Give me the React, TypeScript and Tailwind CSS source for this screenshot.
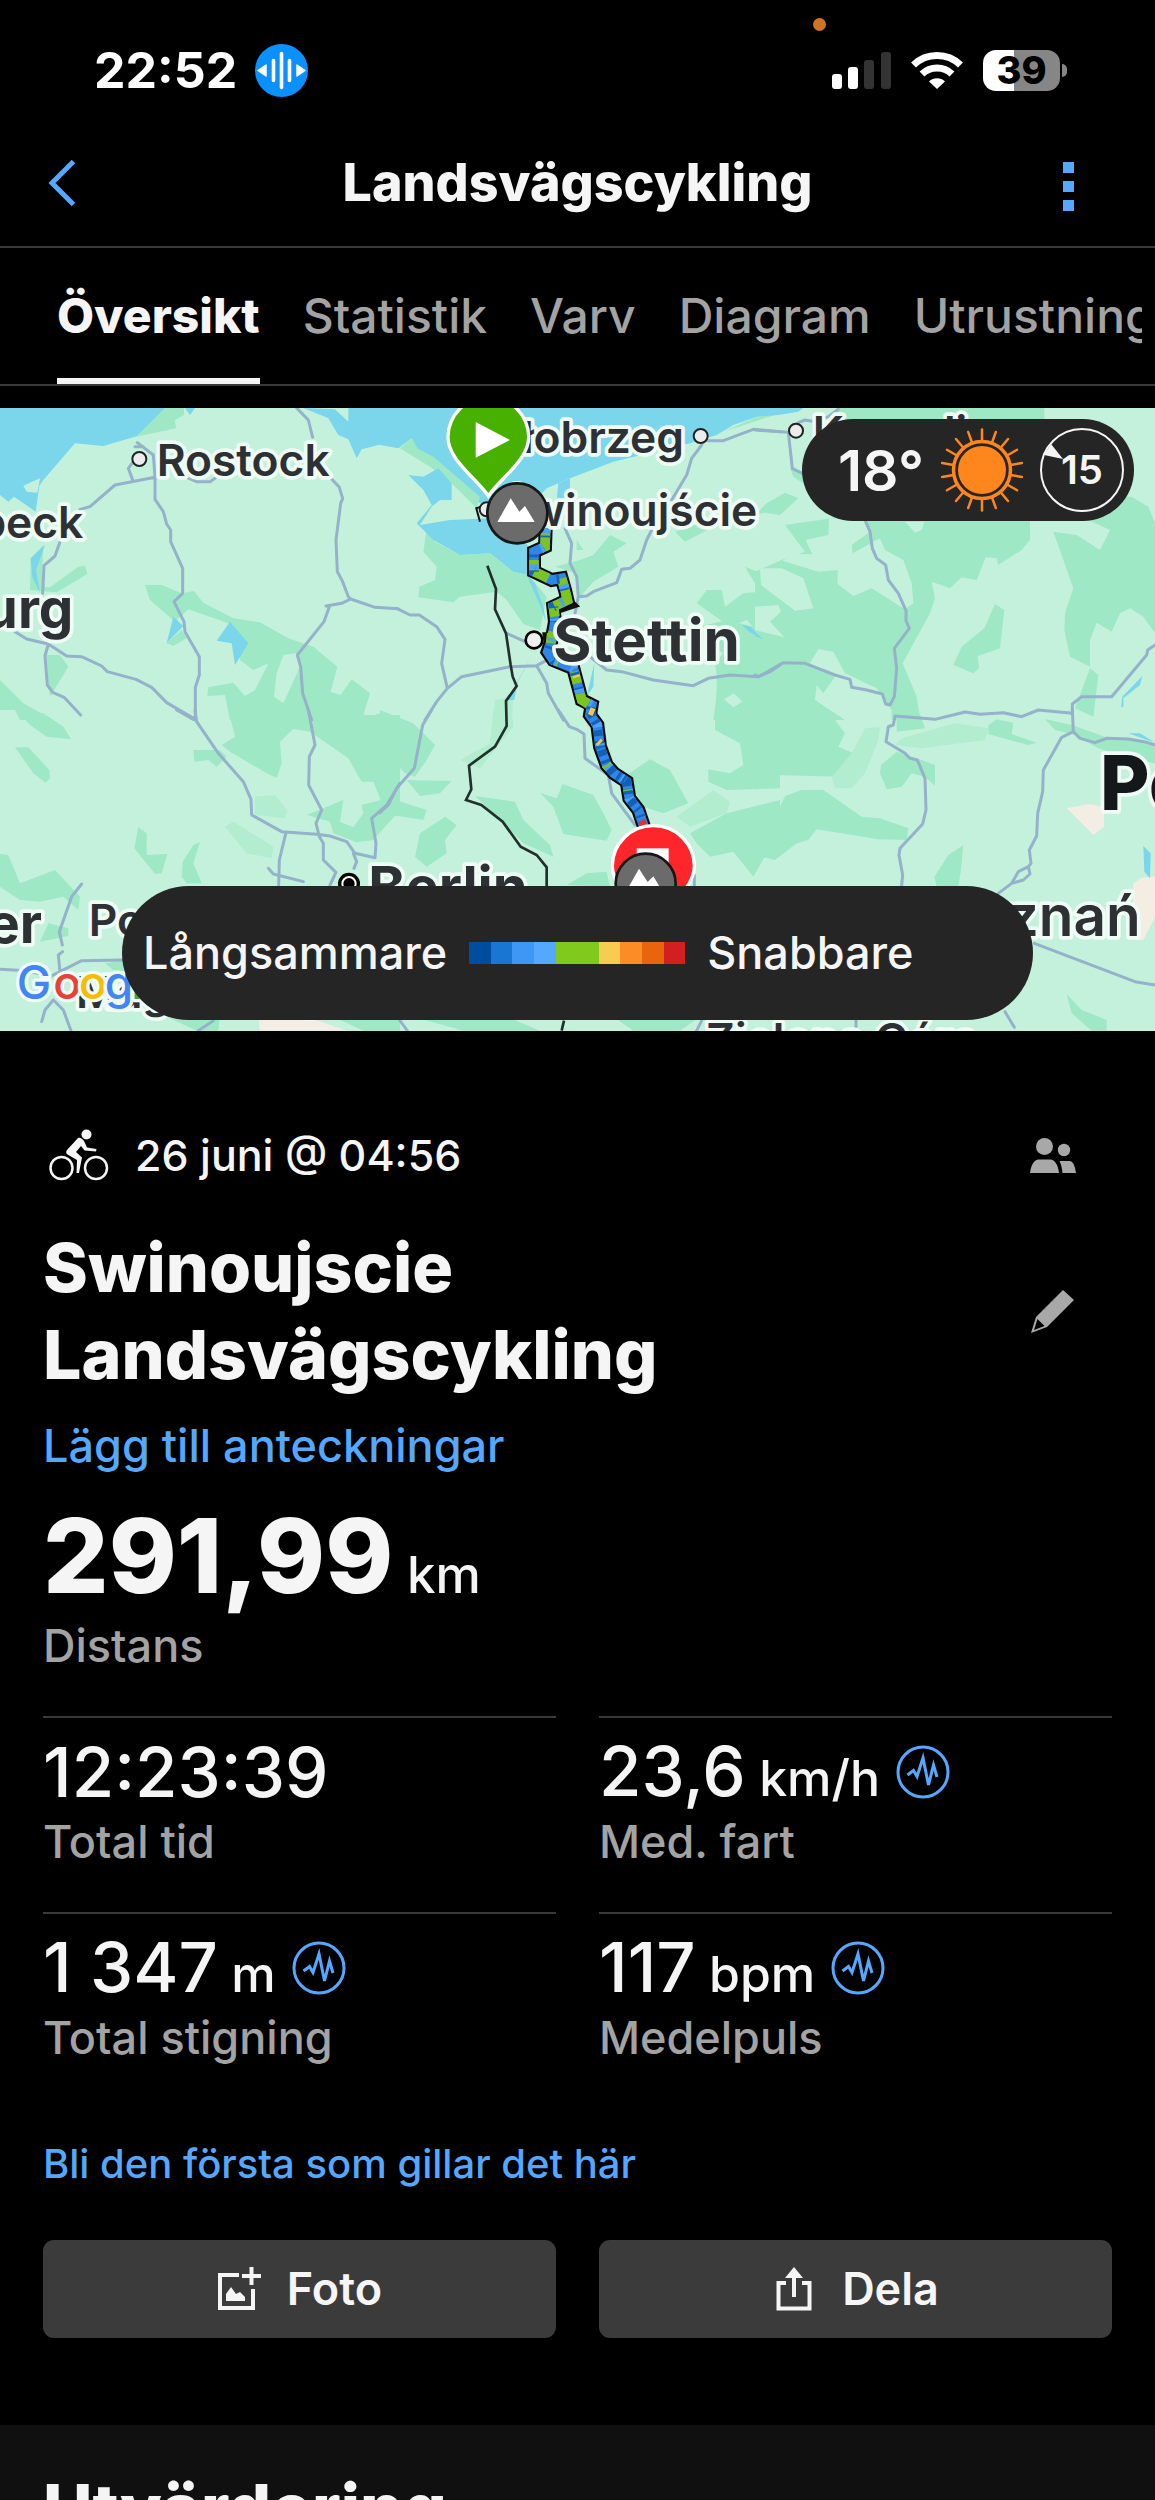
import { useState, type ReactNode } from "react";

const tabs = ["Översikt", "Statistik", "Varv", "Diagram", "Utrustning"];

const speedColors = [
  "bg-[#004c9f]",
  "bg-[#1976d2]",
  "bg-[#3d97f5]",
  "bg-[#55a8ff]",
  "bg-[#80c91d]",
  "bg-[#80c91d]",
  "bg-[#f8cc50]",
  "bg-[#fb8c26]",
  "bg-[#e8650e]",
  "bg-[#d22020]",
];

type Stat = {
  value: string;
  unit?: string;
  label: string;
  chart?: boolean;
};

const stats: Stat[] = [
  { value: "12:23:39", label: "Total tid" },
  { value: "23,6", unit: "km/h", label: "Med. fart", chart: true },
  { value: "1 347", unit: "m", label: "Total stigning", chart: true },
  { value: "117", unit: "bpm", label: "Medelpuls", chart: true },
];

function StatusBar() {
  return (
    <div className="relative flex h-[120px] shrink-0 items-center justify-between pt-5 pr-[88px] pl-[94px]">
      <span className="absolute top-[18px] right-[329px] size-[13px] rounded-full bg-[#d07423]" />
      <div className="flex items-center gap-[18px]">
        <span className="text-[50px] leading-none font-bold text-white">22:52</span>
        <svg viewBox="0 0 53 53" className="size-[53px]" aria-hidden="true">
          <circle cx="26.5" cy="26.5" r="26.5" fill="#0a91ff" />
          <path d="M18.5 16.5v20M26.5 9.5v34M34.5 16.5v20" stroke="#fff" strokeWidth="3.6" strokeLinecap="round" />
          <path d="M3 26.5l8-5.5v11zM50 26.5l-8-5.5v11z" fill="#fff" stroke="#fff" strokeWidth="1.5" strokeLinejoin="round" />
        </svg>
      </div>
      <div className="flex items-center gap-5">
        <svg viewBox="0 0 59 37" className="h-[37px] w-[59px]" aria-hidden="true">
          <rect y="22" width="10" height="15" rx="3" fill="#fff" />
          <rect x="16" y="15" width="10" height="22" rx="3" fill="#fff" />
          <rect x="32" y="8" width="10" height="29" rx="3" fill="#333" />
          <rect x="49" width="10" height="37" rx="3" fill="#333" />
        </svg>
        <svg viewBox="0 0 52 38" className="h-[38px] w-[52px]" aria-hidden="true">
          <g fill="none" stroke="#fff" strokeWidth="7">
            <path d="M2.5 14a34 34 0 0 1 47 0" />
            <path d="M11 23a21.5 21.5 0 0 1 30 0" />
          </g>
          <path d="M18 30.5a11.5 11.5 0 0 1 16 0l-8 7.5z" fill="#fff" />
        </svg>
        <div className="flex items-center gap-[2px]">
          <div className="flex h-[41px] w-[77px] items-center justify-center rounded-[13px] bg-[linear-gradient(to_right,#fff_40%,#868686_40%)]">
            <span className="text-[38px] leading-none font-extrabold text-black">39</span>
          </div>
          <span className="h-[13px] w-[5px] rounded-r-full bg-[#868686]" />
        </div>
      </div>
    </div>
  );
}

function TitleBar() {
  return (
    <header className="grid h-[128px] shrink-0 grid-cols-[1fr_auto_1fr] items-center border-b-2 border-[#3a3a3a] px-[48px]">
      <button type="button" aria-label="Tillbaka" className="justify-self-start">
        <svg viewBox="0 0 28 48" className="h-12 w-7" fill="none" stroke="#55a8ff" strokeWidth="5">
          <path d="M25.5 2.5L4 24l21.5 21.5" />
        </svg>
      </button>
      <h1 className="text-[52px] leading-none font-extrabold">Landsvägscykling</h1>
      <button type="button" aria-label="Mer" className="mr-[33px] flex flex-col gap-2 justify-self-end pt-[6px]">
        <span className="size-[11px] bg-[#55a8ff]" />
        <span className="size-[11px] bg-[#55a8ff]" />
        <span className="size-[11px] bg-[#55a8ff]" />
      </button>
    </header>
  );
}

function TabBar() {
  const [active, setActive] = useState(tabs[0]);

  return (
    <div className="h-[138px] shrink-0 border-b-2 border-[#3a3a3a]">
      <nav className="mr-[13px] flex h-full gap-[43px] overflow-hidden pl-[57px]">
        {tabs.map((tab) => (
          <button
            key={tab}
            type="button"
            onClick={() => setActive(tab)}
            className={
              tab === active
                ? "shrink-0 border-b-[6px] border-[#f5f5f5] pt-[6px] text-[48px] font-extrabold text-[#f5f5f5]"
                : "shrink-0 border-b-[6px] border-transparent pt-[6px] text-[48px] font-medium text-[#a3a3a3]"
            }
          >
            {tab}
          </button>
        ))}
      </nav>
    </div>
  );
}

const routePath =
  "M497 385L495 440L462 455V515L515 540L545 535L555 570L562 600L520 620L525 665L515 720L503 755L520 780L580 805L592 850L605 900L635 915L630 945L652 975L660 1040L680 1095L702 1120L740 1145L748 1195L775 1230L792 1280";

function MountainMarker({ x, y }: { x: number; y: number }) {
  return (
    <g transform={`translate(${x} ${y})`}>
      <circle r="90" fill="#6b6b6b" stroke="#161616" strokeWidth="8" />
      <path d="M-60 26L-20 -45L6 -5L23 -22L52 26Z" fill="#fff" />
    </g>
  );
}

function CityDot({ x, y }: { x: number; y: number }) {
  return <circle cx={x} cy={y} r="21" fill="#ececec" stroke="#1f2224" strokeWidth="6" />;
}

function RouteMap() {
  return (
    <svg
      viewBox="0 0 3465 1869"
      preserveAspectRatio="xMidYMid slice"
      className="h-full w-full"
      role="img"
      aria-label="Karta över rutten"
    >
      <rect width="3465" height="1869" fill="#c4f1dc" />

      {/* north west */}
      <g transform="translate(0 -24)">
        <path fill="#7bd6ec" d="M0 24H500L412 108L310 138L225 130L130 240L118 258L107 335L42 290L25 305L0 285ZM555 24H585L570 45ZM910 24L985 55L1015 105L1045 118L1070 175L1085 148L1145 133L1200 142V24H1045V65L1005 28Z" />
        <path fill="#c4f1dc" d="M70 257L120 235L112 278L80 275Z" />
        <path fill="#9fe8c5" d="M495 24H552V45L525 60L528 85L408 110ZM130 435L92 475L90 570L170 577L262 522L255 497L235 500L150 562L125 560ZM435 555H485L545 580L582 573L610 608L700 655L780 667L865 715L940 740L1012 800L992 875L1022 885L1055 838L1110 880L1090 945H1200V960H690L675 885L622 888L625 862L700 848L735 888L765 870L805 790L760 810L720 780L700 675L565 628L525 665L450 600ZM500 730L545 690L560 715L520 738ZM140 765H180L205 800L150 890L145 850ZM0 840L70 910L160 960H60L45 930H0Z" />
        <path fill="#c4f1dc" d="M850 765L888 760L900 800L850 910L822 890L830 820Z" />
        <path fill="#7bd6ec" d="M135 435L92 475L97 530L120 580L108 510ZM520 650L550 678L500 730ZM690 665L745 730L705 795L695 730L650 722Z" />
      </g>

      {/* north */}
      <g transform="translate(1140 -24)">
        <path fill="#7bd6ec" d="M0 24H1200V32L1130 50L1060 75L1010 105L930 130L700 185L570 235L500 265L440 330L300 310L200 225L110 145L95 115L55 145L0 135Z" />
        <path fill="#9fe8c5" d="M95 115L112 145L160 170L300 290L290 325L215 250L150 200L60 145ZM1200 28L1120 55L1030 95L1200 40ZM140 385L165 425L240 465L330 460L400 515L445 525L500 590L480 690L430 672L380 600L350 575L240 590L220 607L115 592L118 560L165 540L170 500L130 455ZM525 500L600 480L640 465L690 405L740 430L700 455L715 500L640 545L600 590L590 520ZM590 420L610 450L590 450ZM885 395L915 425L1000 380L940 375ZM1095 500L1145 520L1140 560L1200 610V800L1090 760L1010 800V870L1005 960H1200V800L1180 750L1100 660L1050 680L950 610L980 570L1025 570L1035 620L1090 580L1140 575Z" />
        <path fill="#9fe8c5" d="M920 690L1040 660L1200 700V960H1000L1015 850L1005 790L1030 760Z" />
        <path fill="#c4f1dc" d="M1062 880L1087 905L1060 922L1032 898Z" />
        <path fill="#b2edcf" d="M345 900L400 890L395 960H340Z" />
        <path fill="#7bd6ec" d="M85 225L130 230L175 205L215 250V300H180L155 320L120 375L210 360L330 355L450 440L445 525L400 515L330 460L240 465L160 420L110 370L155 315L130 270ZM535 250L570 235V290L530 300ZM440 525L465 550L490 620L497 665L482 620ZM455 765L412 850L403 900H380L410 850ZM643 790L640 860L620 890ZM1085 675L1112 680L1150 720L1110 697Z" />
      </g>

      {/* north east */}
      <g transform="translate(2265 -24)">
        <path fill="#7bd6ec" d="M0 24H145L130 35L70 45L0 50Z" />
        <path fill="#9fe8c5" d="M250 24H868V100H210ZM105 205L150 215L160 260L115 230ZM0 345L35 310L90 278L130 295L75 345L30 338ZM90 375L230 355H825V420L800 450L730 495L725 475L692 472L665 540L620 532L585 565L530 545L540 595L525 640L443 790L485 890L495 960H0V515L80 480L150 455ZM895 395L965 405L1035 450L1065 390L1000 360L1030 290H1130L1180 320L1200 370V700L1165 650L1125 625L1095 640L1070 695L1025 668L1005 720V800L945 770L928 690L930 640L955 565ZM720 612L748 630L735 745L668 768L672 805L655 820L595 795L620 740L688 685ZM1005 805L1030 825L1015 950L960 925Z" />
        <path fill="#c4f1dc" d="M152 420L220 405L222 355L330 360L345 395L290 435L293 460L375 415L390 450L445 480L470 550L475 610L450 628L350 565L295 588L248 552V510L190 515L82 482L120 462L172 463ZM15 505L80 505L145 535L175 625L120 632L18 555ZM0 620L70 615L78 635L45 665L88 712L0 690ZM165 790L190 748L235 755L270 820L365 865L410 930V960H270L180 900L185 855L205 880L240 830ZM450 365H508L500 390L480 398Z" />
        <path fill="#7bd6ec" d="M1162 828L1155 855L1105 895V920L1098 922L1102 890ZM0 695L24 718L0 708Z" />
      </g>

      {/* south west */}
      <g transform="translate(0 906)">
        <path fill="#9fe8c5" d="M50 0L130 10L190 50L213 88L140 80L90 45ZM45 112H85L148 180L150 205L137 218L100 190ZM685 0L705 80L665 105L690 125L800 190L830 203L845 160L840 95L880 57L930 65L1045 145L1085 215L1120 215L1142 270L1085 285L1090 310L1060 352L1020 335L1030 270L920 315L990 335L1000 370L1070 397L1120 390L1200 300V30L1140 10L1095 25L1090 0ZM580 120L660 120L680 140L650 170L625 150L583 155ZM415 352L440 370V435L502 432L485 490L465 492L403 415ZM600 396L580 405L548 455L545 500L560 520H605L580 460ZM0 432L25 435L60 520L165 480L240 560L235 600L190 560L120 575L60 570L0 530ZM145 640L205 655V678L120 695ZM315 760L380 750L400 785L340 780ZM500 920H660L655 962H590Z" />
        <path fill="#b2edcf" d="M765 260L825 255L862 300L855 325L765 315ZM675 350L700 335L820 410L815 445L740 430Z" />
        <path fill="#f3ede4" d="M775 920H920L1040 962H780Z" />
        <path fill="#9fe8c5" d="M1000 920H1200V962H1090Z" />
      </g>

      {/* south */}
      <g transform="translate(1140 906)">
        <path fill="#9fe8c5" d="M0 0L100 40L165 105L140 150L105 200L75 190L0 110ZM80 210L215 213L180 250L120 258ZM0 255L140 300L130 330L0 310ZM195 320L230 345L195 390L200 430L140 470L105 440L120 370ZM285 258L405 275L430 330L510 405L520 440L430 400L340 310ZM480 248L530 265L548 222L640 255L670 310L695 360L680 392L550 372L520 290ZM740 195L810 148L870 180L925 280L850 310L790 290ZM1200 0H1005V60L1080 100L1090 165L1050 190L985 178V215L1040 240L1200 235ZM930 370L1040 310L1200 270V420L1160 430L1120 500L1060 425L990 440L950 400ZM560 525L620 490L680 485L690 530ZM100 920H380L480 962H250ZM700 920H960L900 962H760Z" />
        <path fill="#b2edcf" d="M890 320L1000 240L1050 275L1040 310L930 350ZM340 0H395L400 50L300 175L240 150L330 100Z" />
      </g>

      {/* south east */}
      <g transform="translate(2265 906)">
        <path fill="#9fe8c5" d="M0 0H225L240 30L270 70L250 110L295 130L265 165L255 200L60 195L0 240ZM0 298L75 290L90 258L140 240H205L320 320L375 325L460 355L455 390L370 388L185 358L160 390L125 400L60 450L0 435ZM425 0H490L510 55L425 65ZM700 45L725 28L775 38L770 72L845 98L820 105L755 88L700 72ZM378 165L425 125L500 150L540 165V228L510 200L470 190L440 230L395 238L375 190ZM870 27L950 45L1050 80L1200 100V160L1110 140L1030 115L960 75L900 60ZM625 405L580 435L538 500L545 530H610L618 480ZM935 852L980 900L1055 930V962H1010L950 910ZM975 0H1015V18Z" />
        <path fill="#b2edcf" d="M330 55L375 52L370 90L330 190L290 235H240L230 200L290 130ZM440 85L600 40L700 55L690 90L500 115L420 105Z" />
        <path fill="#f3ede4" d="M935 295L1005 282L1047 290V350L1015 375ZM1135 520L1160 503L1200 500V620L1165 690H1130Z" />
        <path fill="#7bd6ec" d="M1165 408L1187 430L1185 505L1168 485ZM1120 70H1155L1200 98Z" />
      </g>

      {/* motorways */}
      <g fill="none" stroke="#94b2c9" strokeWidth="9" strokeLinejoin="round" strokeLinecap="round">
        <path
          transform="translate(0 -24)"
          d="M890 24L925 60L938 112M990 232L1018 262L1028 296L1022 310L1008 420L1012 515L1028 545L1045 590L1052 597L1125 622L1195 626M1052 597L1025 610L978 618M988 620L972 665L892 765L902 800L908 880L935 960M412 128L460 165L465 230V298L490 335L500 372L512 390V425L548 505V580L522 605L552 665L555 695L598 770V825L586 862V960M405 140H430M400 185L385 205L398 240M465 232L345 255L270 320L240 328M180 425L165 468L132 497L128 580M560 232L590 245H630L645 235M45 695L80 717L145 732L200 768L245 770L305 798L322 815L408 838L455 862L500 908L586 958M145 732L135 768L142 855L158 877L192 892L242 945"
        />
        <path
          transform="translate(1140 -24)"
          d="M50 625L90 645H118L170 680L195 718L185 790L202 865L170 905L135 960M202 865L245 830L390 800L470 797L520 770M380 700L435 725M470 797L500 850L505 880L550 960M630 770L680 810L725 815L820 840L940 857L985 835L1050 825L1135 830L1170 815L1200 795M555 385L575 430L570 490L590 530L595 590L620 588L640 575L710 548L725 508L750 505L780 480L800 420L815 390M595 590L585 640M875 300L920 225L935 175L965 135M985 122H1030L1120 88L1200 95"
        />
        <path
          transform="translate(2265 -24)"
          d="M0 90L100 97L130 68L150 60L180 65L220 50L250 28M100 97L112 205L145 222M330 360L345 395L352 445L365 475L392 495L400 540L430 580L453 632V662L463 685L418 745L425 805L418 890L405 915L392 912L382 882L335 870L290 862L285 838L240 825L150 790L85 788L12 830L0 825M1200 735L1178 750L1175 765L1070 890H980L952 912V940L850 930L800 950L745 938L675 943L630 936L540 958L420 948L415 975L400 980L393 1025L450 1060L465 1075L487 1080L510 1135L513 1230L503 1272L435 1345L432 1365L443 1425L440 1455"
        />
        <path
          transform="translate(0 906)"
          d="M530 0L580 28M585 0L590 35L655 130L730 215L753 268L755 315L845 365L950 373L990 378L1040 395L1065 430L1125 443M925 0L945 105L928 140L926 225L965 300L948 340L958 380L970 400V450L1008 487L990 525M1125 443L1128 400L1115 325L1160 285L1200 220M1060 430L1070 455L1062 475M858 368L838 450L836 525M805 475L820 492L910 515M245 522L215 560L178 665L187 705M188 725L175 735L180 785L245 752L370 750M0 778L80 782L150 800L180 785M160 870L135 900L125 935M160 870L190 900L213 962M640 932L595 962"
        />
        <path
          transform="translate(1140 906)"
          d="M155 0L128 45L103 175L50 235L25 285L0 308M535 0L568 50L590 58L612 72L615 145L685 195L695 250L765 345M943 495V525M60 932L82 962M965 932L950 962"
        />
        <path
          transform="translate(2265 906)"
          d="M952 0L955 65L975 85L1020 98L1055 85L1120 87L1175 97L1200 105M955 65L920 82L865 180L863 245L848 310L845 378L823 420L828 460L820 470L790 485L770 520L730 550M820 470L825 492L805 510L770 520M838 700L1140 815L1200 825M750 905L778 952M303 932V950"
        />
      </g>

      {/* country border */}
      <path
        transform="translate(1140 -24)"
        fill="none"
        stroke="#22302b"
        strokeWidth="8"
        d="M322 497L348 567L345 628L378 700L392 795L398 830L410 858L378 903L380 978L345 1040L267 1097L274 1168L258 1200L304 1215L368 1265L422 1340L470 1365L500 1402V1500M552 1862L545 1892"
      />

      {/* recorded track coloured by speed */}
      <g transform="translate(1140 -24)" fill="none" strokeLinejoin="miter">
        <path d="M565 590L595 618L545 635ZM490 700H520L495 735ZM290 325L322 310M300 365L288 322" fill="#111" stroke="#111" strokeWidth="6" />
        <path d={routePath} stroke="#0b0b0b" strokeWidth="42" />
        <path d={routePath} stroke="#2f86e6" strokeWidth="29" />
        <path d="M497 385L495 440M462 480V515L500 532M545 535L555 570L562 600L520 620L525 650M515 700L512 730M583 815L592 850M600 880L605 900L625 912" stroke="#7cc41f" strokeWidth="29" />
        <path d={routePath} stroke="#4aa0fa" strokeWidth="29" strokeDasharray="14 46 9 61" />
        <path d={routePath} stroke="#1565c0" strokeWidth="29" strokeDasharray="8 39 5 73" strokeDashoffset="25" />
        <path d={routePath} stroke="#7cc41f" strokeWidth="29" strokeDasharray="7 97 5 131" strokeDashoffset="50" />
        <path d="M630 935L652 975L660 1040L680 1095L702 1120L740 1145L748 1195L775 1230" stroke="#1260b8" strokeWidth="27" strokeDasharray="18 14 9 20" />
        <path d="M655 1024L661 1030M628 932L642 938M588 826L590 832" stroke="#f2c84b" strokeWidth="22" />
        <path d="M784 1262L794 1282" stroke="#d93333" strokeWidth="22" />
      </g>

      <CityDot x={418} y={153} />
      <CityDot x={2102} y={84} />
      <CityDot x={1460} y={304} />
      <CityDot x={2388} y={68} />
      <circle cx="1602" cy="696" r="25" fill="#efefef" stroke="#000" strokeWidth="8" />
      <circle cx="1047" cy="1427" r="33" fill="#000" />
      <circle cx="1047" cy="1427" r="20" fill="#000" stroke="#fff" strokeWidth="6" />

      <g
        fill="#2d3134"
        stroke="#effbf5"
        strokeWidth="22"
        strokeLinejoin="round"
        paintOrder="stroke"
        fontFamily="Inter, 'Liberation Sans', sans-serif"
        fontWeight="600"
        fontSize="133"
      >
        <text x="470" y="203">Rostock</text>
        <text x="250" y="389" textAnchor="end">Lübeck</text>
        <text x="220" y="661" textAnchor="end" fontSize="164" fontWeight="700">Hamburg</text>
        <text x="2052" y="134" textAnchor="end">Kołobrzeg</text>
        <text x="2272" y="354" textAnchor="end">Świnoujście</text>
        <text x="1660" y="760" fontSize="175" fontWeight="700">Stettin</text>
        <text x="2438" y="120">Koszalin</text>
        <text x="3300" y="1206" fontSize="228" fontWeight="800" fill="#15181a">Polen</text>
        <text x="3422" y="1583" textAnchor="end" fontSize="170">Poznań</text>
        <text x="126" y="1606" textAnchor="end" fontSize="164" fontWeight="700">Hannover</text>
        <text x="266" y="1583">Potsdam</text>
        <text x="1105" y="1496" fontSize="168" fontWeight="700">Berlin</text>
        <text x="228" y="1801">Magdeburg</text>
        <text x="2118" y="1941">Zielona Góra</text>
      </g>

      <g
        stroke="#effbf5"
        strokeWidth="20"
        strokeLinejoin="round"
        paintOrder="stroke"
        fontFamily="Inter, 'Liberation Sans', sans-serif"
        fontWeight="500"
        fontSize="138"
      >
        <text y="1774">
          <tspan x="50" fill="#4285f4">G</tspan>
          <tspan x="160" fill="#e94235">o</tspan>
          <tspan x="237" fill="#fabb05">o</tspan>
          <tspan x="314" fill="#4285f4">g</tspan>
          <tspan x="394" fill="#34a853">l</tspan>
          <tspan x="424" fill="#e94235">e</tspan>
        </text>
      </g>

      {/* start pin */}
      <path
        transform="translate(1140 -24)"
        d="M325 288C290 235 204 180 204 112A121 121 0 0 1 446 112C446 180 360 235 325 288Z"
        fill="#47b000"
        stroke="#fff"
        strokeWidth="10"
      />
      <path d="M1427 42L1530 96L1427 149Z" fill="#fff" />
      <MountainMarker x={1552} y={316} />

      {/* finish pin */}
      <path
        transform="translate(1140 906)"
        d="M820 640C785 590 697 540 697 468A123 121 0 0 1 943 468C943 540 855 590 820 640Z"
        fill="#ff262b"
        stroke="#fff"
        strokeWidth="10"
      />
      <rect x="1910" y="1321" width="96" height="96" fill="#fff" />
      <MountainMarker x={1937} y={1427} />
    </svg>
  );
}

function SunIcon() {
  const rays = Array.from({ length: 18 }, (_, i) => i * 20);

  return (
    <svg viewBox="-42 -42 84 84" className="size-[84px]" aria-hidden="true">
      <circle r="24" fill="#ff861c" />
      <circle r="28.5" fill="none" stroke="#ff861c" strokeWidth="3.5" />
      {rays.map((angle) => (
        <path
          key={angle}
          d="M0 -29V-40.5"
          stroke="#ff861c"
          strokeWidth="2.5"
          strokeLinecap="round"
          transform={`rotate(${angle})`}
        />
      ))}
    </svg>
  );
}

function MapPanel() {
  return (
    <section className="relative mt-[22px] h-[623px] shrink-0 overflow-hidden">
      <RouteMap />
      <div className="absolute top-[11px] right-[21px] flex h-[102px] w-[332px] items-center rounded-full bg-[#252525] pl-[36px]">
        <span className="w-[102px] text-[57px] leading-none font-semibold">18°</span>
        <SunIcon />
        <div className="relative ml-[16px] flex size-[84px] items-center justify-center">
          <svg viewBox="-42 -42 84 84" className="absolute inset-0" aria-hidden="true">
            <circle r="41" fill="none" stroke="#f5f5f5" strokeWidth="2" />
            <path d="M-31 -26L-19 -11L-38 -15Z" fill="#f5f5f5" />
          </svg>
          <span className="relative text-[40px] leading-none font-semibold">15</span>
        </div>
      </div>
      <div className="absolute right-[122px] bottom-[11px] left-[122px] flex h-[134px] items-center gap-[22px] rounded-full bg-[#252525] pl-[21px] text-[45px] font-medium">
        <span>Långsammare</span>
        <div className="flex h-[22px] w-[216px]">
          {speedColors.map((color, i) => (
            <span key={i} className={`flex-1 ${color}`} />
          ))}
        </div>
        <span>Snabbare</span>
      </div>
    </section>
  );
}

function CyclistIcon() {
  return (
    <svg viewBox="0 0 60 52" className="h-[52px] w-[60px]" aria-hidden="true">
      <g fill="none" stroke="#f5f5f5" strokeWidth="2.5">
        <circle cx="12.5" cy="39" r="11" />
        <circle cx="47" cy="39" r="11" />
      </g>
      <circle cx="37.5" cy="5.5" r="5" fill="#f5f5f5" />
      <path
        d="M29 9C31 8 34 10 35.5 13L38 18.5L47.5 20L47 22.5L35.5 21.5L32 17L27 23L33 28.5L30 44H27.5L28 31L18.5 25.5C16.5 24 17 22.5 18 21Z"
        fill="#f5f5f5"
      />
    </svg>
  );
}

function PeopleIcon() {
  return (
    <svg viewBox="0 0 46 35" className="h-[35px] w-[46px]" fill="#a8a8a8">
      <circle cx="14.5" cy="8.5" r="8.5" />
      <path d="M0 35C1 27 4 22 8 21.5H21C25 22 28 27 29 35Z" />
      <circle cx="34" cy="12" r="6.2" />
      <path d="M29.5 23H40C43.5 24 45 28 46 35H32.5C32 30 31 26 29.5 23Z" />
    </svg>
  );
}

function PencilIcon() {
  return (
    <svg viewBox="0 0 43 43" className="size-[43px]" fill="#a8a8a8">
      <path d="M32 0L43 10L16 37L0 43L5 27ZM6.5 29L3 40L13.5 36Z" fillRule="evenodd" />
    </svg>
  );
}

function ChartButton({ label }: { label: string }) {
  return (
    <button type="button" aria-label={`Visa diagram: ${label}`} className="ml-[16px]">
      <svg viewBox="0 0 54 54" className="size-[54px]" fill="none" stroke="#55a8ff" strokeWidth="3">
        <circle cx="27" cy="27" r="25" />
        <path d="M11.5 30L17.5 25.5L21 31.5L27 13L32.5 40L37.5 20L41 32" />
      </svg>
    </button>
  );
}

function StatCell({ stat }: { stat: Stat }) {
  return (
    <div className="h-[196px] border-t-2 border-[#3a3a3a] pt-6">
      <div className="flex h-[60px] items-center">
        <p className="text-[69px] leading-[60px] font-medium whitespace-pre">
          {stat.value}
          {stat.unit ? <span className="text-[50px] leading-none"> {stat.unit}</span> : null}
        </p>
        {stat.chart ? <ChartButton label={stat.label} /> : null}
      </div>
      <p className="mt-[13px] text-[45px] leading-[54px] font-medium text-[#a3a3a3]">{stat.label}</p>
    </div>
  );
}

function ActionButton({ icon, children }: { icon: ReactNode; children: string }) {
  return (
    <button
      type="button"
      className="flex h-[98px] items-center justify-center gap-[26px] rounded-[11px] bg-[#3b3b3b] text-[45px] font-semibold"
    >
      {icon}
      {children}
    </button>
  );
}

function Summary() {
  return (
    <main className="shrink-0 px-[43px] pt-[93px]">
      <div className="flex h-[62px] items-center justify-between pr-[36px] pl-[6px]">
        <p className="flex items-center gap-[26px] text-[43px] font-medium">
          <CyclistIcon />
          26 juni @ 04:56
        </p>
        <button type="button" aria-label="Synlighet">
          <PeopleIcon />
        </button>
      </div>

      <div className="mt-[38px] flex items-center justify-between pr-[38px]">
        <h2 className="text-[68px] leading-[87px] font-extrabold">
          Swinoujscie
          <br />
          Landsvägscykling
        </h2>
        <button type="button" aria-label="Redigera namn">
          <PencilIcon />
        </button>
      </div>

      <a href="#anteckningar" className="mt-[21px] block text-[45px] leading-[54px] font-medium text-[#55a8ff]">
        Lägg till anteckningar
      </a>

      <p className="mt-[27px] text-[103px] leading-[112px] font-extrabold">
        291,99<span className="text-[51px] leading-none font-medium"> km</span>
      </p>
      <p className="mt-[7px] text-[45px] leading-[54px] font-medium text-[#a3a3a3]">Distans</p>

      <div className="mt-[43px] grid grid-cols-2 gap-x-[43px]">
        {stats.map((stat) => (
          <StatCell key={stat.label} stat={stat} />
        ))}
      </div>

      <a href="#gilla" className="mt-[29px] block text-[40px] leading-[54px] font-medium text-[#55a8ff]">
        Bli den första som gillar det här
      </a>

      <div className="mt-[49px] grid grid-cols-2 gap-x-[43px]">
        <ActionButton
          icon={
            <svg viewBox="0 0 44 44" className="size-11" fill="none" stroke="#f5f5f5" strokeWidth="4">
              <path d="M22 8H3V41H36V22M25 9H44M34.5 0V18" />
              <path d="M9 34V27L14 20L19 27L23 25L28 30V34Z" fill="#f5f5f5" stroke="none" />
            </svg>
          }
        >
          Foto
        </ActionButton>
        <ActionButton
          icon={
            <svg viewBox="-4 0 44 44" className="size-11" fill="none" stroke="#f5f5f5" strokeWidth="4">
              <path d="M10 16H2.5V41.5H33.5V16H26M18 30V5" />
              <path d="M18 0L27 11H9Z" fill="#f5f5f5" stroke="none" />
            </svg>
          }
        >
          Dela
        </ActionButton>
      </div>
    </main>
  );
}

export default function App() {
  return (
    <div className="flex h-screen flex-col overflow-hidden bg-black font-[Inter,'Liberation_Sans',sans-serif] text-[#f5f5f5]">
      <StatusBar />
      <TitleBar />
      <TabBar />
      <MapPanel />
      <Summary />
      <section className="mt-[87px] flex-1 overflow-hidden bg-[#101010] px-[43px] pt-10">
        <h2 className="text-[68px] leading-[87px] font-extrabold">Utvärdering</h2>
      </section>
    </div>
  );
}
